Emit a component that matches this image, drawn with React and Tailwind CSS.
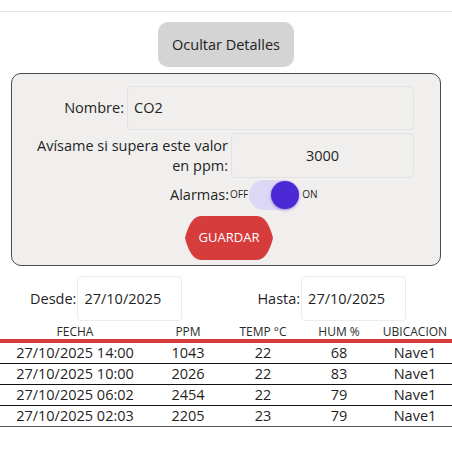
import React from "react";

const rows = [
  { fecha: "27/10/2025 14:00", ppm: 1043, temp: 22, hum: 68, ub: "Nave1" },
  { fecha: "27/10/2025 10:00", ppm: 2026, temp: 22, hum: 83, ub: "Nave1" },
  { fecha: "27/10/2025 06:02", ppm: 2454, temp: 22, hum: 79, ub: "Nave1" },
  { fecha: "27/10/2025 02:03", ppm: 2205, temp: 23, hum: 79, ub: "Nave1" },
];

const App = () => {
  return (
    <div className="w-[452px] h-[452px] bg-white text-[#1f1f1f] overflow-hidden" style={{ fontFamily: "'Open Sans', 'Noto Sans', sans-serif" }}>
      {/* top bar line */}
      <div className="h-[12px] border-b border-[#e3e3e3]" />

      <div className="flex justify-center mt-[10px]">
        <button className="w-[136px] h-[45px] rounded-[10px] bg-[#d4d4d4] text-[14.5px] text-[#222]">
          Ocultar Detalles
        </button>
      </div>

      {/* Details panel */}
      <div className="mx-[11px] mt-[6px] h-[193px] rounded-[10px] border-[1.5px] border-[#4a4a4a] bg-[#f0efee] pt-[12px]">
        <div className="flex justify-end items-center gap-[3px] pr-[26px]">
          <span className="text-[14.5px]">Nombre:</span>
          <div className="w-[287px] h-[44px] rounded-[4px] border border-[#e2e2e2] flex items-center px-[6px] text-[14.5px]">CO2</div>
        </div>
        <div className="flex justify-end items-center gap-[3px] mt-[3px] pr-[26px]">
          <span className="text-[14.5px] text-right leading-[20px]">
            Avísame si supera este valor
            <br />
            en ppm:
          </span>
          <div className="w-[183px] h-[45px] rounded-[4px] border border-[#e2e2e2] flex items-center justify-center text-[14.5px]">3000</div>
        </div>

        <div className="flex items-center pl-[158px] mt-[1px] h-[31px]">
          <span className="text-[14.5px]">Alarmas:</span>
          <span className="text-[10px] ml-[1px]">OFF</span>
          <div className="relative w-[50px] h-[30px] rounded-full bg-[#ddd7f6] mx-[1px]">
            <div className="absolute right-0 top-[1px] w-[28px] h-[28px] rounded-full bg-[#4b2ad6] shadow-[0_1px_3px_rgba(60,30,180,0.45)]" />
          </div>
          <span className="text-[10px] ml-[2px]">ON</span>
        </div>

        <div className="flex justify-center mt-[6px] pl-[6px]">
          <button className="w-[88px] h-[44px] bg-[#d63c3c] text-white text-[13px] [clip-path:path('M16,0_L72,0_C80,0_85,10_88,22_C85,34_80,44_72,44_L16,44_C8,44_3,34_0,22_C3,10_8,0_16,0Z')]">
            GUARDAR
          </button>
        </div>
      </div>

      {/* Date range */}
      <div className="flex items-center mt-[10px] h-[45px]">
        <span className="ml-[30px] text-[14.5px]">Desde:</span>
        <div className="ml-[1px] w-[105px] h-[45px] rounded-[4px] border border-[#ececec] flex items-center px-[6px] text-[14.5px]">27/10/2025</div>
        <span className="ml-[75px] text-[14.5px]">Hasta:</span>
        <div className="ml-[1px] w-[105px] h-[45px] rounded-[4px] border border-[#ececec] flex items-center px-[6px] text-[14.5px]">27/10/2025</div>
      </div>

      {/* Table */}
      <table className="w-[452px] mt-[3px] table-fixed border-collapse">
        <colgroup>
          <col className="w-[150px]" />
          <col className="w-[76px]" />
          <col className="w-[74px]" />
          <col className="w-[78px]" />
          <col className="w-[74px]" />
        </colgroup>
        <thead>
          <tr className="border-b-[4px] border-[#d63c3c] text-[12px] text-[#2a2a2a] h-[17px]">
            <th className="font-normal leading-[15px]">FECHA</th>
            <th className="font-normal leading-[15px]">PPM</th>
            <th className="font-normal leading-[15px]">TEMP °C</th>
            <th className="font-normal leading-[15px]">HUM %</th>
            <th className="font-normal leading-[15px] whitespace-nowrap">UBICACION</th>
          </tr>
        </thead>
        <tbody>
          {rows.map((r, i) => (
            <tr key={i} className={`text-[14.5px] h-[21px] border-b-[1.5px] ${i === rows.length - 1 ? "border-[#555]" : "border-[#111]"}`}>
              <td className="text-center leading-[20px]">{r.fecha}</td>
              <td className="text-center leading-[20px]">{r.ppm}</td>
              <td className="text-center leading-[20px]">{r.temp}</td>
              <td className="text-center leading-[20px]">{r.hum}</td>
              <td className="text-center leading-[20px]">{r.ub}</td>
            </tr>
          ))}
        </tbody>
      </table>
    </div>
  );
};

export default App;
